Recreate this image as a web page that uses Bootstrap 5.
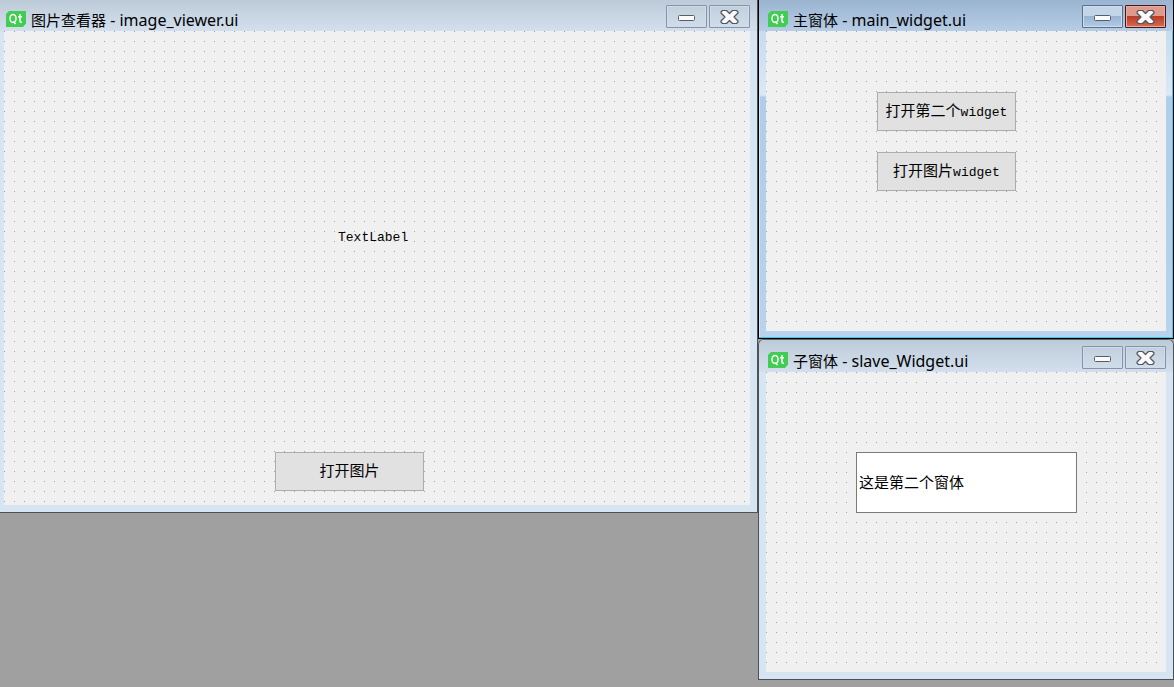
<!DOCTYPE html>
<html lang="zh-CN">
<head>
<meta charset="utf-8">
<meta name="viewport" content="width=device-width, initial-scale=1">
<title>Qt Designer</title>
<link href="https://cdn.jsdelivr.net/npm/bootstrap@5.3.0/dist/css/bootstrap.min.css" rel="stylesheet">
<style>
  body { background: #a0a0a0; color: #000; font-family: "Noto Sans", "Noto Sans CJK SC", sans-serif; font-size: 15px; line-height: 20px; }
  .side-column { flex: 0 0 416px; }

  /* window frame */
  .mdi { background: #d7e4f1; border: 1px solid #4c5158; border-top: 0; padding: 0 7px 7px; }
  .mdi-viewer { border-left: 0; padding-left: 4px; }
  .mdi-active { background: linear-gradient(#a0b9d5 0, #c6dbf1 30px, #dce8f5 95px, #b0cde9 97px, #b7d3ed 100%); border-color: #000; box-shadow: inset -1px -1px #4cc4e4, inset 1px 0 #d5e5f5; }
  .mdi-stacked { border-top: 1px solid #5b626b; border-radius: 6px 6px 0 0; }
  .caption-bar { height: 31px; margin: 0 -7px; padding: 0 7px 0 9px; background: linear-gradient(#bdcbd9, #d3dfed); }
  .mdi-viewer .caption-bar { margin-left: -4px; padding-left: 6px; }
  .mdi-active .caption-bar { background: linear-gradient(#9ab4d0, #b7cde6); }
  .mdi-stacked .caption-bar { height: 32px; border-radius: 5px 5px 0 0; }
  .qt-logo { width: 20px; height: 16px; margin-bottom: 4px; }
  .caption-text { margin: 0 0 1px 5px; font-size: 15px; line-height: 20px; font-weight: 400; }
  .caption-latin { font-size: 16px; }
  .caption-buttons { gap: 2px; }

  .ctl { width: 41px; height: 23px; margin-bottom: 3px; border: 1px solid #8593ab; border-radius: 1px; background: transparent; box-shadow: inset 0 0 0 1px #d0dce8; }
  .ctl-blue { border-color: #566f92; background: linear-gradient(#c2d5e9 50%, #98b5d4 50%, #b1cbe6); }
  .ctl-red { border-color: #43161a; background: linear-gradient(#df9a8d 50%, #bd3b27 50%, #d56b51); box-shadow: inset 0 0 0 1px #e9aca0; }

  /* form surface with the 10px snap grid */
  .form-grid { background: #f0f0f0 conic-gradient(from 0deg at 1px 1px, transparent 75%, #a0a0a0 75%) 0 0 / 10px 10px; min-height: 300px; }
  .form-viewer { padding: 197px 0 14px 271px; }
  .form-main { padding: 61px 0 0 111px; gap: 21px; }
  .form-slave { padding: 80px 0 0 90px; }
  .form-grid, .push, .line { font-family: "Liberation Mono", "Noto Sans CJK SC", monospace; }
  .latin { font-size: 13px; }
  .text-label { margin: 0 0 204px 63px; }
  .push { width: 139px; height: 39px; padding: 2px 0 0; font-size: 15px; line-height: 20px; color: #000; background: #e1e1e1; border: 1px solid #adadad; }
  .push-wide { width: 149px; }
  .line { width: 221px; height: 61px; padding: 0 2px 2px; font-size: 15px; color: #000; background: #fff; border: 1px solid #7a7a7a; }
</style>
</head>
<body>
<svg class="d-none" aria-hidden="true">
  <symbol id="qt" viewBox="0 0 20 16">
    <path d="M3 0h17v12.500L17 16H0V3z" fill="#41cd52"/>
    <g fill="none" stroke="#fff" stroke-width="1.500">
      <ellipse cx="7" cy="7.500" rx="3" ry="4"/>
      <path d="M7.500 10.500 9.500 13M14 3v7q0 1.500 2 1.200M12 5.800h4"/>
    </g>
  </symbol>
  <symbol id="min" viewBox="0 0 20 16">
    <rect x="1.500" y="6.500" width="16" height="5" rx="1" fill="#fafafa" stroke="#585d66"/>
  </symbol>
  <symbol id="close" viewBox="0 0 20 16">
    <path d="M2.500 1.500h4L9.500 4.500l3-3h4l1.500 1.500v1L14 8l4 4v1l-1.500 1.500h-4l-3-3-3 3h-4L1 13v-1l4-4-4-4V3z" fill="#fafafa" stroke="#50555e" stroke-width="1.200" stroke-linejoin="round"/>
  </symbol>
</svg>

<main class="d-flex align-items-start">
  <section class="mdi mdi-viewer flex-grow-1">
    <header class="caption-bar d-flex align-items-end">
      <svg class="qt-logo" aria-hidden="true"><use href="#qt"/></svg>
      <h1 class="caption-text text-nowrap">图片查看器<span class="caption-latin"> - image_viewer.ui</span></h1>
      <div class="caption-buttons d-flex ms-auto">
        <button type="button" class="ctl d-flex align-items-center justify-content-center p-0" aria-label="最小化"><svg width="20" height="16"><use href="#min"/></svg></button>
        <button type="button" class="ctl d-flex align-items-center justify-content-center p-0" aria-label="关闭"><svg width="20" height="16"><use href="#close"/></svg></button>
      </div>
    </header>
    <div class="form-grid form-viewer d-flex flex-column align-items-start">
      <div class="text-label latin">TextLabel</div>
      <button type="button" class="push push-wide">打开图片</button>
    </div>
  </section>

  <div class="side-column">
    <section class="mdi mdi-active">
      <header class="caption-bar d-flex align-items-end">
        <svg class="qt-logo" aria-hidden="true"><use href="#qt"/></svg>
        <h2 class="caption-text text-nowrap">主窗体<span class="caption-latin"> - main_widget.ui</span></h2>
        <div class="caption-buttons d-flex ms-auto">
          <button type="button" class="ctl ctl-blue d-flex align-items-center justify-content-center p-0" aria-label="最小化"><svg width="20" height="16"><use href="#min"/></svg></button>
          <button type="button" class="ctl ctl-red d-flex align-items-center justify-content-center p-0" aria-label="关闭"><svg width="20" height="16"><use href="#close"/></svg></button>
        </div>
      </header>
      <div class="form-grid form-main d-flex flex-column align-items-start">
        <button type="button" class="push">打开第二个<span class="latin">widget</span></button>
        <button type="button" class="push">打开图片<span class="latin">widget</span></button>
      </div>
    </section>

    <section class="mdi mdi-stacked">
      <header class="caption-bar d-flex align-items-end">
        <svg class="qt-logo" aria-hidden="true"><use href="#qt"/></svg>
        <h2 class="caption-text text-nowrap">子窗体<span class="caption-latin"> - slave_Widget.ui</span></h2>
        <div class="caption-buttons d-flex ms-auto">
          <button type="button" class="ctl d-flex align-items-center justify-content-center p-0" aria-label="最小化"><svg width="20" height="16"><use href="#min"/></svg></button>
          <button type="button" class="ctl d-flex align-items-center justify-content-center p-0" aria-label="关闭"><svg width="20" height="16"><use href="#close"/></svg></button>
        </div>
      </header>
      <div class="form-grid form-slave">
        <input type="text" class="line d-block" value="这是第二个窗体" aria-label="子窗体文本">
      </div>
    </section>
  </div>
</main>
<script src="https://cdn.jsdelivr.net/npm/bootstrap@5.3.0/dist/js/bootstrap.bundle.min.js"></script>
</body>
</html>
